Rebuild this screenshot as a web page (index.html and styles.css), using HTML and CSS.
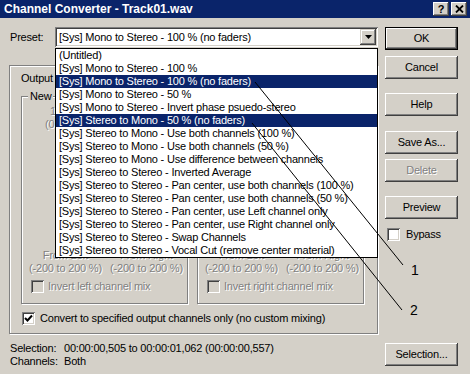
FILE: index.html
```html
<!DOCTYPE html>
<html lang="en">
<head>
    <meta charset="UTF-8">
    <title>Channel Converter - Track01.wav</title>
    <link rel="stylesheet" href="styles.css">
</head>
<body>

<div class="dialog">
    <div class="titlebar">
        <span class="title">Channel Converter - Track01.wav</span>
        <div class="caption-buttons">
            <span class="caption-btn">?</span>
            <span class="caption-btn">
                <svg width="9" height="8" viewBox="0 0 9 8"><path d="M1 0.5 L8 7.5 M8 0.5 L1 7.5" stroke="#000" stroke-width="1.8" fill="none"/></svg>
            </span>
        </div>
    </div>

    <div class="content">
        <div class="main">
            <div class="preset-row">
                <span class="preset-label">Preset:</span>
                <div class="combo">
                    <span class="combo-text">[Sys] Mono to Stereo - 100 % (no faders)</span>
                    <span class="combo-arrow">
                        <svg width="7" height="4" viewBox="0 0 7 4"><path d="M0 0 H7 L3.5 4 Z" fill="#000"/></svg>
                    </span>

                    <!-- open dropdown -->
                    <ul class="preset-list">
                        <li>(Untitled)</li>
                        <li>[Sys] Mono to Stereo - 100 %</li>
                        <li class="selected">[Sys] Mono to Stereo - 100 % (no faders)</li>
                        <li>[Sys] Mono to Stereo - 50 %</li>
                        <li>[Sys] Mono to Stereo - Invert phase psuedo-stereo</li>
                        <li class="selected">[Sys] Stereo to Mono - 50 % (no faders)</li>
                        <li>[Sys] Stereo to Mono - Use both channels (100 %)</li>
                        <li>[Sys] Stereo to Mono - Use both channels (50 %)</li>
                        <li>[Sys] Stereo to Mono - Use difference between channels</li>
                        <li>[Sys] Stereo to Stereo - Inverted Average</li>
                        <li>[Sys] Stereo to Stereo - Pan center, use both channels (100 %)</li>
                        <li>[Sys] Stereo to Stereo - Pan center, use both channels (50 %)</li>
                        <li>[Sys] Stereo to Stereo - Pan center, use Left channel only</li>
                        <li>[Sys] Stereo to Stereo - Pan center, use Right channel only</li>
                        <li>[Sys] Stereo to Stereo - Swap Channels</li>
                        <li>[Sys] Stereo to Stereo - Vocal Cut (remove center material)</li>
                    </ul>
                </div>
            </div>

            <div class="group">
                <div class="output-row">Output</div>

                <div class="channel-groups">
                    <fieldset class="channel">
                        <legend>New</legend>
                        <div class="amount disabled">
                            <div class="amount-value">1</div>
                            <div>(0</div>
                        </div>
                        <div class="ranges disabled">
                            <div class="range"><div>From Left</div><div>(-200 to 200 %)</div></div>
                            <div class="range"><div>From Right</div><div>(-200 to 200 %)</div></div>
                        </div>
                        <div class="check-row disabled">
                            <span class="check off"></span>
                            <span>Invert left channel mix</span>
                        </div>
                    </fieldset>

                    <fieldset class="channel no-legend">
                        <div class="amount"></div>
                        <div class="ranges disabled">
                            <div class="range"><div>From Left</div><div>(-200 to 200 %)</div></div>
                            <div class="range"><div>From Right</div><div>(-200 to 200 %)</div></div>
                        </div>
                        <div class="check-row disabled">
                            <span class="check off"></span>
                            <span>Invert right channel mix</span>
                        </div>
                    </fieldset>
                </div>

                <div class="check-row convert">
                    <span class="check">
                        <svg width="9" height="9" viewBox="0 0 9 9"><path d="M1 4 L3.5 6.5 L8 1.5" stroke="#000" stroke-width="2" fill="none"/></svg>
                    </span>
                    <span>Convert to specified output channels only (no custom mixing)</span>
                </div>
            </div>

            <div class="selection-info">
                <span>Selection:</span><span>00:00:00,505 to 00:00:01,062 (00:00:00,557)</span>
                <span>Channels:</span><span>Both</span>
            </div>
        </div>

        <div class="side">
            <div class="btn btn-default">OK</div>
            <div class="btn gap-6">Cancel</div>
            <div class="btn gap-14">Help</div>
            <div class="btn gap-15">Save As...</div>
            <div class="btn gap-5 disabled">Delete</div>
            <div class="btn gap-14">Preview</div>
            <div class="bypass">
                <span class="check"></span>
                <span>Bypass</span>
            </div>
            <div class="btn selection-btn">Selection...</div>
        </div>
    </div>

    <!-- callout lines drawn on top of the screenshot -->
    <svg class="callouts" width="470" height="374" viewBox="0 0 470 374">
        <line x1="255" y1="82" x2="403" y2="265" stroke="#000" stroke-width="1"/>
        <line x1="252" y1="123" x2="402" y2="310" stroke="#000" stroke-width="1"/>
        <text x="411" y="275" class="callout-num">1</text>
        <text x="410" y="315" class="callout-num">2</text>
    </svg>
</div>

</body>
</html>
```

FILE: styles.css
```css
body {
    margin: 0;
    font-family: "Liberation Sans", Arial, sans-serif;
    font-size: 11px;
    line-height: 13px;
    letter-spacing: -0.2px;
    color: #000;
    background-color: #d4d0c8;
}

.dialog {
    position: relative;
    width: 470px;
    height: 374px;
    overflow: hidden;
    background-color: #d4d0c8;
}

/* title bar */
.titlebar {
    height: 18px;
    background-color: #0a246a;
    display: flex;
    align-items: center;
    justify-content: space-between;
    padding: 0 3px 0 4px;
}

.title {
    color: white;
    font-weight: bold;
    font-size: 12px;
    letter-spacing: 0;
    line-height: 18px;
}

.caption-buttons {
    display: flex;
    gap: 2px;
}

.caption-btn {
    width: 16px;
    height: 14px;
    box-sizing: border-box;
    display: flex;
    align-items: center;
    justify-content: center;
    font-weight: bold;
    font-size: 11px;
    background-color: #d4d0c8;
    box-shadow: inset -1px -1px #404040, inset 1px 1px #fff, inset -2px -2px #808080;
}

/* layout */
.content {
    display: flex;
    gap: 7px;
    padding: 9px 0 0 9px;
}

.main {
    width: 369px;
}

.side {
    width: 73px;
    display: flex;
    flex-direction: column;
}

/* preset combo */
.preset-row {
    display: flex;
    align-items: center;
    height: 20px;
}

.preset-label {
    width: 45px;
    padding-left: 1px;
}

.combo {
    position: relative;
    width: 323px;
    height: 20px;
    box-sizing: border-box;
    padding: 2px;
    display: flex;
    align-items: center;
    background-color: white;
    box-shadow: inset 1px 1px #808080, inset -1px -1px #fff, inset 2px 2px #404040, inset -2px -2px #d4d0c8;
}

.combo-text {
    flex: 1;
    padding-left: 2px;
    white-space: nowrap;
}

.combo-arrow {
    width: 16px;
    height: 16px;
    box-sizing: border-box;
    display: flex;
    align-items: center;
    justify-content: center;
    background-color: #d4d0c8;
    box-shadow: inset -1px -1px #404040, inset 1px 1px #d4d0c8, inset -2px -2px #808080, inset 2px 2px #fff;
}

.preset-list {
    position: absolute;
    top: 21px;
    left: 0;
    z-index: 2;
    width: 323px;
    box-sizing: border-box;
    margin: 0;
    padding: 0;
    list-style: none;
    background-color: white;
    border: 1px solid #000;
}

.preset-list li {
    height: 13px;
    padding-left: 3px;
    white-space: nowrap;
}

.preset-list li.selected {
    background-color: #0a246a;
    color: white;
}

/* group boxes */
.group {
    margin-top: 18px;
    padding: 6px 13px 8px 11px;
    border: 1px solid #808080;
    box-shadow: inset 1px 1px #fff, 1px 1px #fff;
}

.output-row {
    height: 13px;
    white-space: nowrap;
}

.channel-groups {
    display: flex;
    gap: 9px;
    margin-top: 5px;
}

.channel {
    width: 167px;
    min-width: 0;
    box-sizing: border-box;
    margin: 0;
    padding: 2px 6px 10px 6px;
    border: 1px solid #808080;
    box-shadow: inset 1px 1px #fff, 1px 1px #fff;
}

.channel.no-legend {
    margin-top: 6px;
    padding-top: 8px;
}

.channel legend {
    padding: 0 2px;
    line-height: 13px;
    background-color: #d4d0c8;
    white-space: nowrap;
}

.amount {
    height: 26px;
    margin-left: 17px;
}

.amount-value {
    padding-left: 5px;
}

.ranges {
    display: flex;
    gap: 8px;
    margin-top: 118px;
    padding-left: 1px;
}

.range {
    width: 73px;
    flex-shrink: 0;
    text-align: center;
    white-space: nowrap;
}

.check-row {
    display: flex;
    align-items: center;
    gap: 4px;
    height: 13px;
    margin-top: 5px;
    padding-left: 3px;
    white-space: nowrap;
}

.check-row.convert {
    margin-top: 8px;
    padding-left: 1px;
    gap: 5px;
}

.check {
    width: 13px;
    height: 13px;
    flex-shrink: 0;
    box-sizing: border-box;
    display: flex;
    align-items: center;
    justify-content: center;
    background-color: white;
    box-shadow: inset 1px 1px #808080, inset -1px -1px #fff, inset 2px 2px #404040, inset -2px -2px #d4d0c8;
}

.check.off {
    background-color: #d4d0c8;
}

.disabled {
    color: #808080;
    text-shadow: 1px 1px 0 #fff;
}

/* selection info */
.selection-info {
    display: grid;
    grid-template-columns: 54px auto;
    margin-top: 8px;
    padding-left: 1px;
    white-space: nowrap;
}

/* buttons */
.btn {
    width: 73px;
    height: 23px;
    box-sizing: border-box;
    display: flex;
    align-items: center;
    justify-content: center;
    background-color: #d4d0c8;
    box-shadow: inset -1px -1px #404040, inset 1px 1px #fff, inset -2px -2px #808080, inset 2px 2px #d4d0c8;
}

.btn-default {
    box-shadow: inset 0 0 0 1px #000, inset -2px -2px #404040, inset 2px 2px #fff, inset -3px -3px #808080;
}

.gap-5 { margin-top: 5px; }
.gap-6 { margin-top: 6px; }
.gap-14 { margin-top: 14px; }
.gap-15 { margin-top: 15px; }

.bypass {
    display: flex;
    align-items: center;
    gap: 6px;
    height: 13px;
    margin-top: 9px;
    padding-left: 2px;
}

.selection-btn {
    margin-top: 102px;
}

/* callouts */
.callouts {
    position: absolute;
    top: 0;
    left: 0;
    z-index: 3;
    pointer-events: none;
}

.callout-num {
    font-family: "Liberation Sans", Arial, sans-serif;
    font-size: 14px;
    letter-spacing: 0;
    fill: #000;
}
```
